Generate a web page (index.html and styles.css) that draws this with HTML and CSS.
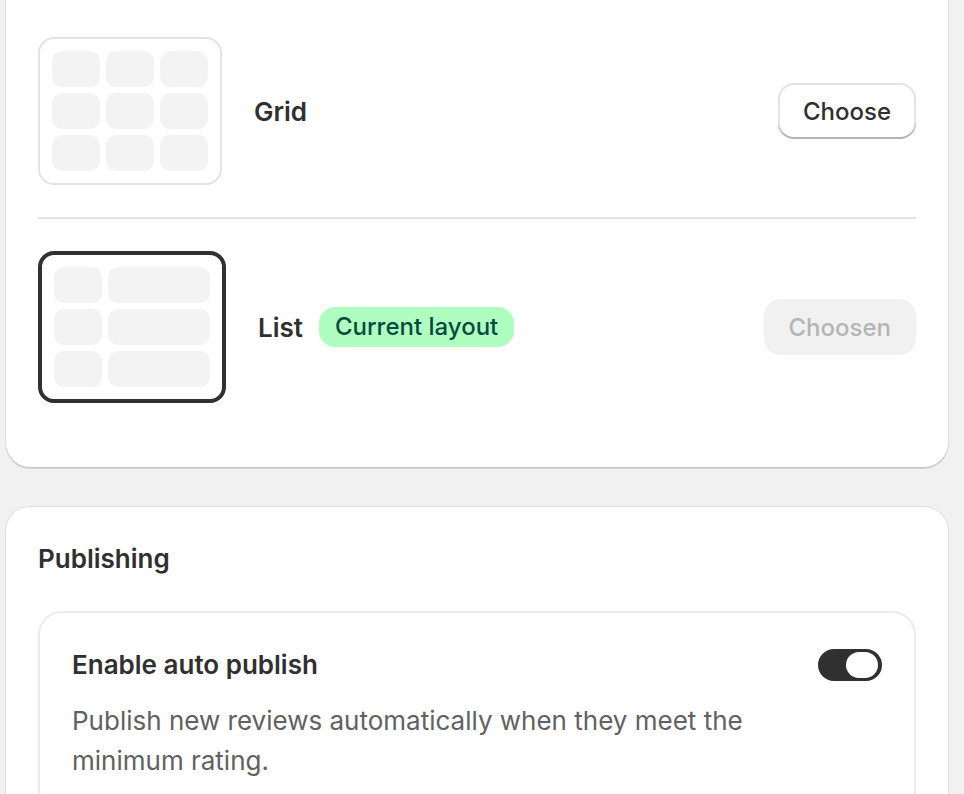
FILE: index.html
```html
<!DOCTYPE html>
<html lang="en">
<head>
    <meta charset="UTF-8">
    <meta name="viewport" content="width=device-width, initial-scale=1.0">
    <title>Layout settings</title>
    <link rel="stylesheet" href="styles.css">
</head>

<body>
    <main class="page">
        <!-- Layout picker -->
        <section class="card">
            <div class="layout-option">
                <div class="thumb thumb-grid">
                    <span></span><span></span><span></span>
                    <span></span><span></span><span></span>
                    <span></span><span></span><span></span>
                </div>
                <div class="option-label">Grid</div>
                <button class="btn" type="button">Choose</button>
            </div>

            <hr class="divider">

            <div class="layout-option">
                <div class="thumb thumb-list is-active">
                    <span></span><span></span>
                    <span></span><span></span>
                    <span></span><span></span>
                </div>
                <div class="option-label">
                    List
                    <span class="badge">Current layout</span>
                </div>
                <button class="btn" type="button" disabled>Choosen</button>
            </div>
        </section>

        <!-- Publishing settings -->
        <section class="card">
            <h2 class="card-title">Publishing</h2>
            <div class="setting">
                <div class="setting-head">
                    <h3>Enable auto publish</h3>
                    <label class="toggle">
                        <input type="checkbox" checked>
                        <span class="knob"></span>
                    </label>
                </div>
                <p class="setting-text">Publish new reviews automatically when they meet the minimum rating.</p>
            </div>
        </section>
    </main>
</body>
</html>
```

FILE: styles.css
```css
* {
    margin: 0;
    padding: 0;
    box-sizing: border-box;
}

html, body {
    height: 100%;
    overflow: hidden;
}

body {
    background: #f1f1f1;
    font-family: Inter, "Noto Sans", Arial, sans-serif;
    color: #303030;
}

.page {
    /* scrolled a little past the top of the first card */
    margin-top: -27px;
    padding: 0 16px 0 6px;
    display: flex;
    flex-direction: column;
    gap: 40px;
}

.card {
    background: #fff;
    border-radius: 24px;
    padding: 32px;
    box-shadow: 0 0 0 1px rgba(0, 0, 0, 0.07), 0 2px 0 rgba(26, 26, 26, 0.12);
}

/* layout options */

.layout-option {
    display: flex;
    align-items: center;
    gap: 32px;
    padding: 32px 0;
}

.thumb {
    display: grid;
    gap: 6px;
    padding: 12px;
    border: 2px solid #e3e3e3;
    border-radius: 16px;
    grid-auto-rows: 36px;
}

.thumb span {
    background: #f3f3f3;
    border-radius: 10px;
}

.thumb-grid {
    grid-template-columns: repeat(3, 48px);
}

.thumb-list {
    grid-template-columns: 48px 102px;
}

.thumb.is-active {
    border: 4px solid #303030;
}

.option-label {
    flex: 1;
    display: flex;
    align-items: center;
    gap: 16px;
    font-size: 26px;
    font-weight: 600;
}

.badge {
    background: #affebf;
    color: #014b40;
    border-radius: 16px;
    padding: 2px 16px;
    line-height: 36px;
    font-size: 24px;
    font-weight: 500;
}

.btn {
    min-height: 56px;
    padding: 0 25px;
    border: none;
    border-radius: 16px;
    background: #fff;
    color: #303030;
    font-family: inherit;
    font-size: 24px;
    font-weight: 500;
    cursor: pointer;
    box-shadow: inset 0 -2px 0 #b5b5b5, inset 0 0 0 2px #e3e3e3;
}

.btn:disabled {
    background: #f1f1f1;
    color: #b5b5b5;
    box-shadow: none;
    cursor: default;
}

.divider {
    border: none;
    height: 2px;
    background: #e3e3e3;
}

/* publishing */

.card-title {
    font-size: 26px;
    line-height: 40px;
    font-weight: 600;
    margin-bottom: 32px;
}

.setting {
    border: 2px solid #ebebeb;
    border-radius: 24px;
    padding: 32px;
}

.setting-head {
    display: flex;
    justify-content: space-between;
    align-items: center;
}

.setting-head h3 {
    font-size: 26px;
    line-height: 40px;
    font-weight: 600;
}

.setting-text {
    margin-top: 16px;
    max-width: 700px;
    font-size: 26px;
    line-height: 40px;
    color: #616161;
}

.toggle {
    position: relative;
    width: 64px;
    height: 32px;
    border-radius: 16px;
    background: #303030;
    cursor: pointer;
}

.toggle input {
    display: none;
}

.knob {
    position: absolute;
    top: 3px;
    right: 4px;
    width: 32px;
    height: 26px;
    border-radius: 13px;
    background: #fff;
}
```
